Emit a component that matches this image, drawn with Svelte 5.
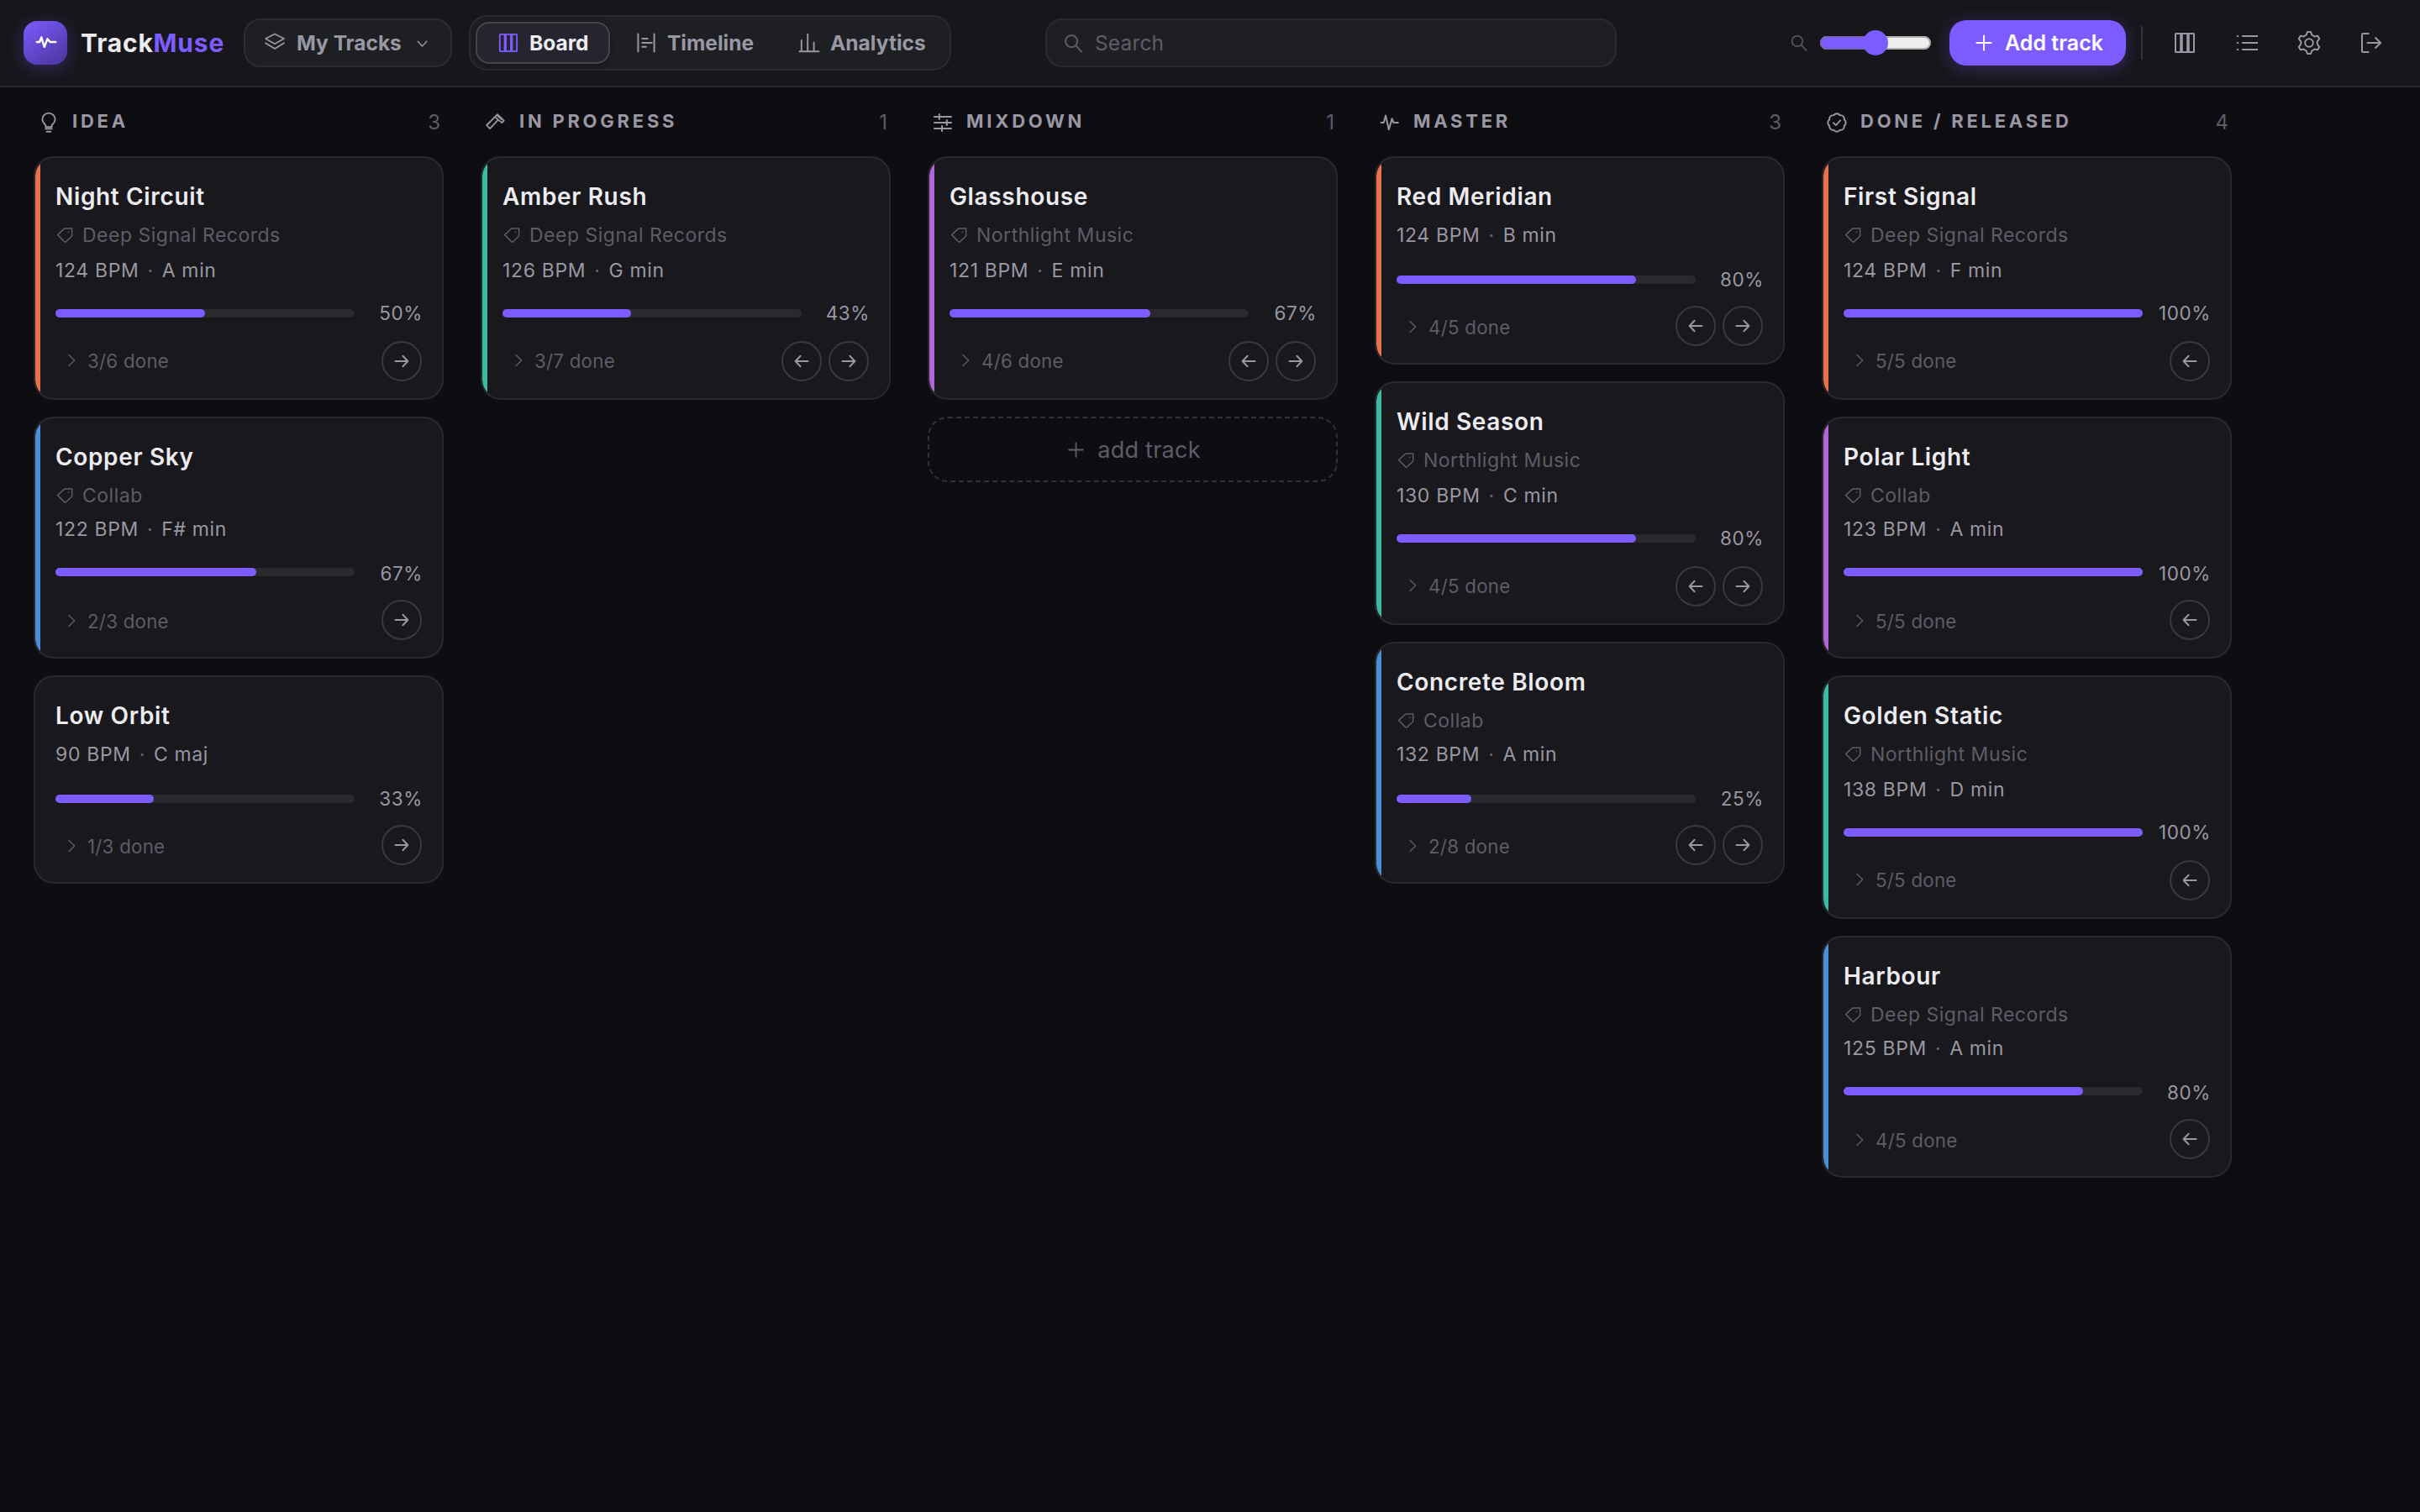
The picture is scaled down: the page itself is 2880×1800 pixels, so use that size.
<script>
  // Stroke paths on a 26x26 grid unless a viewBox is given.
  const icons = {
    pulse: { d: 'M2.5 13h3.2l2.4-8.4 3.7 16.6 3.8-13L17.4 13h5.4' },
    layers: { d: 'M2 8 13 2.5 24 8 13 14.3ZM2 13.2 13 20l11-6.8', width: 1.8 },
    caretDown: { d: 'M7 10.5 13 17l6-6.5', width: 1.7 },
    caretRight: { d: 'M9.5 5.2 17.3 13l-7.8 7.8', width: 1.7 },
    timeline: { d: 'M3.4 2.5v21M22.6 2.5v21M8.3 8h6.4M8.3 13h11.4M8.3 17.8h4.6', width: 2 },
    chart: { d: 'M1.5 23.2h23M3.8 23V10M11.2 23V2.8M18.6 23V12.5', width: 1.9 },
    search: { d: 'M17.5 10.7a6.8 6.8 0 1 1-13.6 0 6.8 6.8 0 0 1 13.6 0ZM15.8 15.8l6.4 6.9', width: 1.9 },
    plus: { d: 'M13 3.6v18.8M3.6 13h18.8', width: 2 },
    list: { d: 'M8 5h17.5M8 13h17.5M8 21h17.5M1.8 5h.4M1.8 13h.4M1.8 21h.4', width: 2.2 },
    logout: { d: 'M9.7 2H3.5Q2 2 2 3.5v19Q2 24 3.5 24h6.2M8.5 13H24M18 7l6.2 6-6.2 6', width: 2 },
    gear: {
      box: '-14 -14 28 28',
      d: 'M-2-13H2L3.4-9.3 6.35-7.6 10.26-8.23 12.26-4.77 9.75-1.7V1.7L12.26 4.77 10.26 8.23 6.35 7.6 3.4 9.3 2 13H-2L-3.4 9.3-6.35 7.6-10.26 8.23-12.26 4.77-9.75 1.7V-1.7L-12.26-4.77-10.26-8.23-6.35-7.6-3.4-9.3ZM4.8 0A4.8 4.8 0 1 1-4.8 0 4.8 4.8 0 0 1 4.8 0Z',
      width: 2,
    },
    bulb: { d: 'M9.4 18.2v-1.4C9.4 14.8 5.4 13.6 5.4 9.2a7.6 7.6 0 0 1 15.2 0c0 4.4-4 5.6-4 7.6v1.4ZM9.2 20.4h7.6M10.6 23.8h4.8', width: 1.9 },
    hammer: { d: 'M11.6 6.6 15 3.2l7.8 7.4-2.4 2.4-4.6-3.4M11.6 6.6 2.2 16l3.8 4.2 9.8-10.6M12.2 6.4l4.6 4M15.4 5l4.6 4.2', width: 1.8 },
    sliders: { d: 'M3 6h20M3 13h20M3 20h20M8.8 3v6M17.8 10v6M12 17v6', width: 2 },
    seal: {
      box: '-13 -13 26 26',
      d: 'M-3.64-8.78A4.4 4.4 0 0 1 3.64-8.78 4.4 4.4 0 0 1 8.78-3.64 4.4 4.4 0 0 1 8.78 3.64 4.4 4.4 0 0 1 3.64 8.78 4.4 4.4 0 0 1-3.64 8.78 4.4 4.4 0 0 1-8.78 3.64 4.4 4.4 0 0 1-8.78-3.64 4.4 4.4 0 0 1-3.64-8.78ZM-4 .3-1.1 3.1 4.1-2.6',
      width: 1.9,
    },
    tag: { box: '0 0 22 22', d: 'M2.6 10.6 9.9 3.7q.7-.6 1.6-.6h8.2v7.9q0 .9-.6 1.5l-6.9 6.5q-.6.5-1.2 0ZM15.4 7.2h.3', width: 1.5 },
    left: { box: '0 0 24 24', d: 'M19.6 12H4.6M10.6 5.8l-6 6.2 6 6.2', width: 2 },
    right: { box: '0 0 24 24', d: 'M4.4 12h15M13.4 5.8l6 6.2-6 6.2', width: 2 },
  };

  const views = [
    { name: 'Board', icon: 'columns', active: true },
    { name: 'Timeline', icon: 'timeline' },
    { name: 'Analytics', icon: 'chart' },
  ];

  const orange = '#e8734a';
  const blue = '#4a90d9';
  const teal = '#3dbaa2';
  const violet = '#b068d9';

  const deepSignal = 'Deep Signal Records';
  const northlight = 'Northlight Music';

  const columns = [
    {
      name: 'Idea',
      icon: 'bulb',
      next: true,
      tracks: [
        { title: 'Night Circuit', label: deepSignal, bpm: 124, key: 'A min', done: 3, total: 6, color: orange },
        { title: 'Copper Sky', label: 'Collab', bpm: 122, key: 'F# min', done: 2, total: 3, color: blue, fit: 'tight shift' },
        { title: 'Low Orbit', bpm: 90, key: 'C maj', done: 1, total: 3, fit: 'low' },
      ],
    },
    {
      name: 'In progress',
      icon: 'hammer',
      prev: true,
      next: true,
      tracks: [
        { title: 'Amber Rush', label: deepSignal, bpm: 126, key: 'G min', done: 3, total: 7, color: teal },
      ],
    },
    {
      name: 'Mixdown',
      icon: 'sliders',
      prev: true,
      next: true,
      adding: true,
      tracks: [
        { title: 'Glasshouse', label: northlight, bpm: 121, key: 'E min', done: 4, total: 6, color: violet },
      ],
    },
    {
      name: 'Master',
      icon: 'pulse',
      prev: true,
      next: true,
      tracks: [
        { title: 'Red Meridian', bpm: 124, key: 'B min', done: 4, total: 5, color: orange, fit: 'low' },
        { title: 'Wild Season', label: northlight, bpm: 130, key: 'C min', done: 4, total: 5, color: teal },
        { title: 'Concrete Bloom', label: 'Collab', bpm: 132, key: 'A min', done: 2, total: 8, color: blue, fit: 'tight low' },
      ],
    },
    {
      name: 'Done / Released',
      icon: 'seal',
      prev: true,
      tracks: [
        { title: 'First Signal', label: deepSignal, bpm: 124, key: 'F min', done: 5, total: 5, color: orange },
        { title: 'Polar Light', label: 'Collab', bpm: 123, key: 'A min', done: 5, total: 5, color: violet, fit: 'tight shift' },
        { title: 'Golden Static', label: northlight, bpm: 138, key: 'D min', done: 5, total: 5, color: teal },
        { title: 'Harbour', label: deepSignal, bpm: 125, key: 'A min', done: 4, total: 5, color: blue, fit: 'tight shift' },
      ],
    },
  ];

  const percent = (track) => Math.round((track.done / track.total) * 100);
</script>

{#snippet icon(name, size = 26)}
  {#if name === 'columns'}
    <svg class="icon" width={size} height={size} viewBox="0 0 26 26" stroke-width="2">
      <rect x="2" y="2" width="22" height="22" rx=".6" />
      <path d="M9 2v22M17 2v22" stroke-width="3.6" stroke-linecap="butt" />
    </svg>
  {:else}
    <svg class="icon" width={size} height={size} viewBox={icons[name].box ?? '0 0 26 26'} stroke-width={icons[name].width ?? 2}>
      <path d={icons[name].d} />
    </svg>
  {/if}
{/snippet}

<div class="app">
  <header class="topbar">
    <div class="brand">
      <span class="logo">
        <svg width="52" height="52" viewBox="0 0 52 52">
          <path d="M15.8 25h3.4l2-5.6 3.6 11.4 3.7-9.6L31.6 25h6.6" />
        </svg>
      </span>
      <span class="wordmark">Track<b>Muse</b></span>
    </div>

    <button class="workspace">
      {@render icon('layers')}
      My Tracks
      {@render icon('caretDown', 23)}
    </button>

    <nav class="views">
      {#each views as view (view.name)}
        <button class="view" class:active={view.active}>
          {@render icon(view.icon, view.icon === 'columns' ? 24 : 26)}
          {view.name}
        </button>
      {/each}
    </nav>

    <label class="search">
      {@render icon('search', 27)}
      <span>Search</span>
    </label>

    <div class="actions">
      <div class="scale">
        {@render icon('search', 24)}
        <div class="slider"><i class="slider__fill"></i><i class="slider__thumb"></i></div>
      </div>
      <button class="add">
        {@render icon('plus', 24)}
        Add track
      </button>
      <span class="divider"></span>
      <button class="tool">{@render icon('columns')}</button>
      <button class="tool">{@render icon('list')}</button>
      <button class="tool">{@render icon('gear', 28)}</button>
      <button class="tool">{@render icon('logout')}</button>
    </div>
  </header>

  <main class="board">
    {#each columns as column (column.name)}
      <section class="column">
        <div class="column__head">
          {@render icon(column.icon)}
          <h2>{column.name}</h2>
          <span class="count">{column.tracks.length}</span>
        </div>

        {#each column.tracks as track (track.title)}
          <article class="card {track.fit ?? ''}" class:bare={!track.label} style="--accent: {track.color ?? 'transparent'}">
            <h3>{track.title}</h3>
            {#if track.label}
              <p class="label">{@render icon('tag', 22)}{track.label}</p>
            {/if}
            <p class="meta">{track.bpm} BPM<span class="dot">·</span>{track.key}</p>
            <div class="progress">
              <div class="bar"><div class="bar__fill" style="width: {percent(track)}%"></div></div>
              <span class="pct">{percent(track)}%</span>
            </div>
            <footer>
              <button class="toggle">
                {@render icon('caretRight', 22)}
                <span>{track.done}/{track.total} done</span>
              </button>
              {#if column.prev}
                <button class="move">{@render icon('left', 24)}</button>
              {/if}
              {#if column.next}
                <button class="move">{@render icon('right', 24)}</button>
              {/if}
            </footer>
          </article>
        {/each}

        {#if column.adding}
          <button class="placeholder">
            {@render icon('plus', 23)}
            add track
          </button>
        {/if}
      </section>
    {/each}
  </main>
</div>

<style>
  :global(body) { background: #0e0d12; }

  .app {
    min-height: 1800px;
    background: #0e0d12;
    color: #ecebf0;
    font-family: Inter, 'Liberation Sans', sans-serif;
  }

  button {
    margin: 0;
    padding: 0;
    border: 0;
    background: none;
    color: inherit;
    font: inherit;
  }

  h2, h3, p { margin: 0; }

  .icon {
    display: block;
    flex: none;
    fill: none;
    stroke: currentColor;
    stroke-linecap: round;
    stroke-linejoin: round;
  }

  /* Top bar */
  .topbar {
    display: flex;
    align-items: center;
    box-sizing: border-box;
    height: 104px;
    padding: 0 28px;
    border-bottom: 2px solid #29282d;
    background: #17161b;
    color: #9997a3;
  }

  .brand {
    display: flex;
    align-items: center;
    gap: 16px;
    width: 262px;
  }

  .logo {
    height: 52px;
    border-radius: 16px;
    background: linear-gradient(145deg, #7c5cff, #49359a);
    box-shadow: 0 4px 20px rgba(124, 92, 255, 0.3);
  }
  .logo path {
    fill: none;
    stroke: #fff;
    stroke-width: 2.4;
    stroke-linecap: round;
    stroke-linejoin: round;
  }

  .wordmark {
    color: #ecebf0;
    font-size: 30px;
    font-weight: 700;
    letter-spacing: 0.8px;
  }
  .wordmark b {
    color: #7c5cff;
    font-weight: inherit;
  }

  .workspace {
    display: flex;
    align-items: center;
    gap: 13px;
    box-sizing: border-box;
    width: 248px;
    height: 58px;
    padding-left: 22px;
    border: 2px solid #2c2d31;
    border-radius: 20px;
    background: #1e1f23;
    font-size: 24.5px;
    font-weight: 650;
  }

  .views {
    display: flex;
    gap: 4px;
    box-sizing: border-box;
    width: 574px;
    margin-left: 20px;
    padding: 6px;
    border: 2px solid #2a2b2f;
    border-radius: 22px;
    background: #1e1f23;
  }

  .view {
    display: flex;
    flex: none;
    align-items: center;
    gap: 12px;
    box-sizing: border-box;
    height: 50px;
    padding: 0 21px 0 24px;
    border: 2px solid transparent;
    border-radius: 16px;
    font-size: 24.5px;
    font-weight: 650;
  }
  .view.active {
    gap: 13px;
    width: 160px;
    padding: 0 0 0 25px;
    border-color: #46454c;
    background: #26252f;
    color: #ecebf0;
    box-shadow: 0 2px 6px rgba(0, 0, 0, 0.35);
  }
  .view.active .icon { color: #7c5cff; }

  .search {
    display: flex;
    align-items: center;
    gap: 12px;
    box-sizing: border-box;
    width: 680px;
    height: 58px;
    margin-left: 112px;
    padding-left: 18px;
    border: 2px solid #2a2b2f;
    border-radius: 20px;
    background: #1e1f23;
    color: #5f5d69;
    font-size: 24.5px;
    letter-spacing: 0.15px;
  }

  .actions {
    display: flex;
    align-items: center;
    gap: 14px;
    margin-left: auto;
  }

  .scale {
    display: flex;
    align-items: center;
    gap: 13px;
    margin-right: 8px;
    color: #55535d;
  }

  .slider {
    position: relative;
    box-sizing: border-box;
    width: 132px;
    height: 16px;
    border: 2px solid #b2b2b2;
    border-radius: 8px;
    background: #efefef;
  }
  .slider__fill {
    position: absolute;
    inset: -2px 62px -2px -2px;
    box-sizing: border-box;
    border: 2px solid #7465b8;
    border-radius: 8px 0 0 8px;
    background: #7c5cff;
  }
  .slider__thumb {
    position: absolute;
    top: -9px;
    left: 50%;
    width: 30px;
    height: 30px;
    margin-left: -15px;
    border-radius: 50%;
    background: #7c5cff;
  }

  .add {
    display: flex;
    align-items: center;
    gap: 13px;
    box-sizing: border-box;
    width: 210px;
    height: 54px;
    padding-left: 29px;
    border-radius: 20px;
    background: #7c5cff;
    color: #fff;
    font-size: 25px;
    font-weight: 600;
    box-shadow: 0 4px 20px rgba(124, 92, 255, 0.3);
  }

  .divider {
    width: 2px;
    height: 40px;
    margin: 0 6px 0 4px;
    background: #35343a;
  }

  .tool {
    display: grid;
    place-items: center;
    width: 60px;
    height: 60px;
  }

  /* Board */
  .board {
    display: grid;
    grid-template-columns: repeat(5, 488px);
    gap: 44px;
    padding: 0 40px;
  }

  .column {
    display: flex;
    flex-direction: column;
    gap: 20px;
  }

  .column__head {
    display: flex;
    align-items: center;
    height: 82px;
    margin-bottom: -20px;
    padding: 0 4px 0 5px;
    color: #9997a3;
  }
  .column__head .icon { margin-top: 2px; }
  .column__head h2 {
    margin-left: 15px;
    padding-bottom: 2px;
    font-size: 22px;
    font-weight: 650;
    letter-spacing: 3.75px;
    text-transform: uppercase;
  }

  .count {
    margin-left: auto;
    color: #5e5c68;
    font-size: 24px;
  }

  .card {
    box-sizing: border-box;
    padding: 29px 24px 20px;
    border: 2px solid #2a292e;
    border-radius: 24px;
    background: linear-gradient(to right, var(--accent) 6px, transparent 6px) padding-box, #19181c;
  }

  .card h3 {
    font-size: 28px;
    font-weight: 600;
    line-height: 34px;
    letter-spacing: 0.65px;
  }

  .label, .meta {
    font-size: 23px;
    line-height: 28px;
    letter-spacing: 0.5px;
  }
  .label {
    display: flex;
    align-items: center;
    gap: 10px;
    margin-top: 15px;
    color: #5e5c68;
  }
  .meta {
    margin-top: 14px;
    color: #9997a3;
    letter-spacing: 0.65px;
  }
  .dot {
    margin: 0 10px;
    color: #6b6975;
  }

  .progress {
    display: flex;
    align-items: center;
    justify-content: space-between;
    height: 28px;
    margin: 23px 0 19px;
  }
  .bar {
    width: 356px;
    height: 10px;
    border-radius: 5px;
    background: #2a292e;
  }
  .bar__fill {
    height: 100%;
    border-radius: 5px;
    background: #7c5cff;
  }
  .pct {
    margin-right: -1px;
    padding-bottom: 2px;
    color: #9997a3;
    font-size: 22.5px;
    letter-spacing: 0.6px;
  }

  .card footer {
    display: flex;
    align-items: center;
    gap: 8px;
  }
  .toggle {
    display: flex;
    align-items: center;
    gap: 8px;
    margin-right: auto;
    padding: 0 0 2px 8px;
    color: #5e5c68;
    font-size: 22.3px;
    letter-spacing: 0.25px;
  }
  .move {
    display: grid;
    place-items: center;
    box-sizing: border-box;
    width: 48px;
    height: 48px;
    border: 2px solid #3a393f;
    border-radius: 50%;
    color: #9997a3;
  }

  .card.bare .meta { margin-top: 15px; }
  .card.tight .meta { margin-top: 12px; }
  .card.low .progress { margin: 25px 0 17px; }
  .card.shift .pct { padding: 2px 0 0; }
  .card.tight .toggle,
  .card.bare .toggle { padding: 2px 0 0 8px; }

  .placeholder {
    display: flex;
    align-items: center;
    justify-content: center;
    gap: 14px;
    box-sizing: border-box;
    height: 78px;
    padding-left: 2px;
    border: 2px dashed #333238;
    border-radius: 24px;
    color: #5e5c68;
    font-size: 27px;
    letter-spacing: 0.25px;
  }
</style>
